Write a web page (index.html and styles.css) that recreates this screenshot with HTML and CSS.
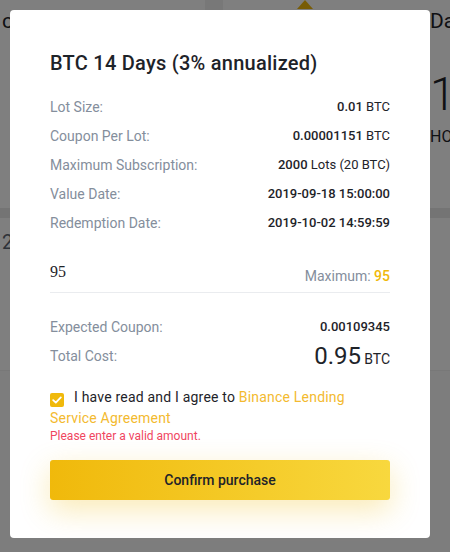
FILE: index.html
```html
<!DOCTYPE html>
<html lang="en">
<head>
<meta charset="utf-8">
<title>Purchase</title>
<link rel="stylesheet" href="styles.css">
</head>
<body>
<div class="page">
  <div class="top">
    <div class="cell cell-a"><span class="bg-text">c</span></div>
    <div class="cell cell-b">
      <span class="tab-tri"></span>
      <div class="far">
        <div class="bg-text">Da</div>
        <div class="big-num">1</div>
        <div class="small-ho">HO</div>
      </div>
    </div>
  </div>
  <div class="cell cell-c"><span class="bg-text2">2</span></div>
  <div class="cell cell-d"></div>
</div>

<div class="overlay">
  <div class="modal">
    <h1 class="title">BTC 14 Days (3% annualized)</h1>
    <div class="rows">
      <div class="row"><span class="label">Lot Size:</span><span class="val">0.01 <span class="unit">BTC</span></span></div>
      <div class="row"><span class="label">Coupon Per Lot:</span><span class="val">0.00001151 <span class="unit">BTC</span></span></div>
      <div class="row"><span class="label">Maximum Subscription:</span><span class="val">2000 <span class="unit">Lots (20 BTC)</span></span></div>
      <div class="row"><span class="label">Value Date:</span><span class="val">2019-09-18 15:00:00</span></div>
      <div class="row"><span class="label">Redemption Date:</span><span class="val">2019-10-02 14:59:59</span></div>
    </div>
    <div class="amount">
      <span class="amount-input">95</span>
      <span class="max">Maximum: <b>95</b></span>
    </div>
    <div class="rows rows-2">
      <div class="row"><span class="label">Expected Coupon:</span><span class="val">0.00109345</span></div>
      <div class="row"><span class="label">Total Cost:</span><span class="val"><span class="total">0.95</span> <span class="unit unit-lg">BTC</span></span></div>
    </div>
    <p class="agree">
      <span class="check"><svg width="10" height="8" viewBox="0 0 10 8"><path d="M1.2 4.2 L3.8 6.6 L8.8 1.4" fill="none" stroke="#fff" stroke-width="1.8" stroke-linecap="round" stroke-linejoin="round"/></svg></span>I have read and I agree to <a class="link">Binance Lending <span class="nw">Service Agreement</span></a>
    </p>
    <p class="error">Please enter a valid amount.</p>
    <button class="confirm">Confirm purchase</button>
  </div>
</div>
</body>
</html>
```
FILE: styles.css
```css
* { box-sizing: border-box; }
html, body { margin: 0; padding: 0; }
body {
  width: 450px;
  height: 552px;
  overflow: hidden;
  font-family: Roboto, "Liberation Sans", sans-serif;
  background: #ffffff;
}
.page {
  display: grid;
  grid-template-rows: 208px 152px 1fr;
  row-gap: 10px;
  height: 552px;
  background: #e8e8e8;
}
.top {
  display: grid;
  grid-template-columns: 205px 1fr;
  column-gap: 18px;
  background: #f0f0f0;
}
.cell { background: #fff; overflow: hidden; position: relative; }
.cell-a { padding: 9px 0 0 2px; }
.bg-text { font-size: 21px; color: #1e2329; line-height: 24px; }
.bg-text2 { font-size: 20px; color: #5e6673; line-height: 24px; display: block; padding: 12px 0 0 2px; }
.tab-tri {
  position: absolute;
  left: 74px; top: 0;
  width: 0; height: 0;
  border-left: 8px solid transparent;
  border-right: 8px solid transparent;
  border-bottom: 9px solid #f0b90b;
}
.far { margin-left: 207px; padding-top: 9px; white-space: nowrap; }
.big-num { font-size: 46px; font-weight: 300; color: #1e2329; line-height: 50px; margin-top: 36px; }
.small-ho { font-size: 16px; color: #1e2329; line-height: 20px; margin-top: 8px; }
.cell-d { background: #fbfbfb; border-top: 1px solid #f0f0f0; margin-top: -10px; }

.overlay {
  position: fixed;
  inset: 0;
  background: rgba(0,0,0,0.5);
  padding: 10px;
}
.modal {
  width: 420px;
  height: 528px;
  background: #fff;
  border-radius: 4px;
  padding: 39px 40px 0 40px;
}
.title {
  margin: 0;
  font-size: 20px;
  line-height: 28px;
  font-weight: 500;
  letter-spacing: 0.25px;
  color: #1e2329;
}
.rows { margin-top: 15px; }
.row {
  display: flex;
  justify-content: space-between;
  align-items: center;
  height: 29px;
}
.label { font-size: 14px; color: #848e9c; }
.val { font-size: 13px; font-weight: 500; color: #1e2329; }
.unit { font-weight: 400; }
.unit-lg { font-size: 14px; }
.total { font-size: 24px; font-weight: 400; }
.rows-2 { margin-top: 19px; }
.amount {
  display: flex;
  justify-content: space-between;
  align-items: center;
  height: 41px;
  margin-top: 15px;
  border-bottom: 1px solid #eaecef;
}
.amount-input {
  font-family: "Liberation Serif", serif;
  font-size: 16px;
  color: #1e2329;
}
.max { font-size: 14px; color: #848e9c; padding-top: 8px; }
.max b { color: #f0b90b; font-weight: 500; }
.agree {
  margin: 17px 0 0 0;
  font-size: 14px;
  line-height: 21px;
  letter-spacing: 0.2px;
  color: #1e2329;
}
.nw { white-space: nowrap; }
.check {
  display: inline-flex;
  align-items: center;
  justify-content: center;
  width: 14px; height: 14px;
  background: #f0b90b;
  border-radius: 2px;
  margin-right: 10px;
  vertical-align: -2px;
}
.link { color: #f3ba2f; }
.error {
  margin: 0;
  font-size: 12px;
  line-height: 14px;
  color: #f0465f;
}
.confirm {
  display: block;
  width: 340px;
  height: 40px;
  margin-top: 17px;
  border: 0;
  border-radius: 3px;
  background: linear-gradient(90deg, #f0b90b, #f8d83e);
  box-shadow: 0 10px 30px rgba(240,185,11,0.3);
  font-family: Roboto, "Liberation Sans", sans-serif;
  font-size: 14px;
  font-weight: 500;
  color: #1e2329;
}
```
